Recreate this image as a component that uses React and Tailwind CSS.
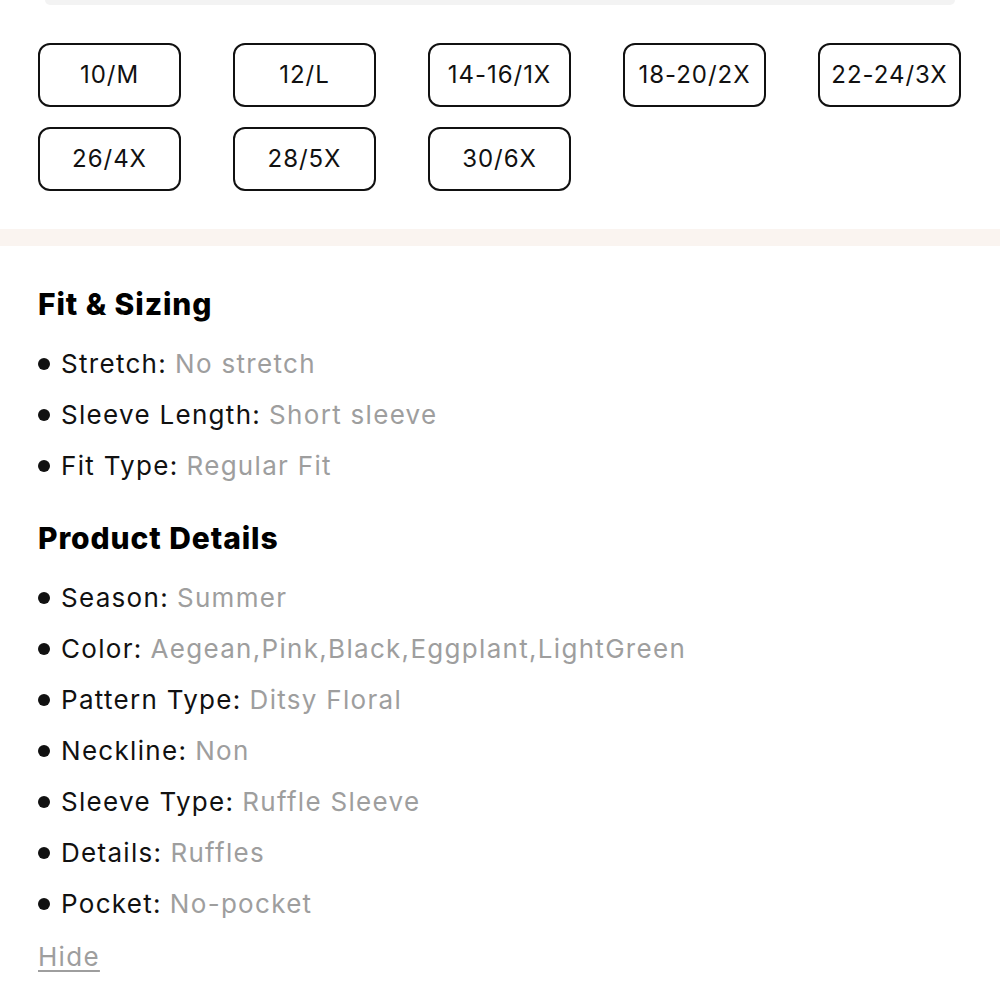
import React from "react";

const sizes = ["10/M", "12/L", "14-16/1X", "18-20/2X", "22-24/3X", "26/4X", "28/5X", "30/6X"];

const fit = [
  ["Stretch", "No stretch"],
  ["Sleeve Length", "Short sleeve"],
  ["Fit Type", "Regular Fit"],
];

const details = [
  ["Season", "Summer"],
  ["Color", "Aegean,Pink,Black,Eggplant,LightGreen"],
  ["Pattern Type", "Ditsy Floral"],
  ["Neckline", "Non"],
  ["Sleeve Type", "Ruffle Sleeve"],
  ["Details", "Ruffles"],
  ["Pocket", "No-pocket"],
];

function Item({ label, value }) {
  return (
    <div className="flex items-center h-[51px] text-[26px] tracking-[0.05em] whitespace-nowrap">
      <span className="w-[12px] h-[12px] rounded-full bg-[#111] mr-[11px] shrink-0"></span>
      <span className="text-[#111]">{label}:</span>
      <span className="text-[#9e9e9e] ml-[8px]">{value}</span>
    </div>
  );
}

export default function App() {
  return (
    <div className="w-[1000px] h-[1000px] bg-white overflow-hidden" style={{ fontFamily: "Inter, 'Open Sans', sans-serif" }}>
      <div className="mx-[45px] h-[5px] bg-[#f3f3f3] rounded-b-[16px]"></div>
      <div className="grid grid-cols-[repeat(5,143px)] gap-x-[52px] gap-y-[20px] pl-[38px] pt-[38px]">
        {sizes.map((s) => (
          <div key={s} className="h-[64px] border-2 border-[#111] rounded-[12px] flex items-center justify-center text-[24px] tracking-[0.04em] text-[#111]">
            {s}
          </div>
        ))}
      </div>
      <div className="mt-[38px] h-[17px] bg-[#faf4f0]"></div>
      <div className="pl-[38px] pt-[38px]">
        <div className="text-[30px] font-extrabold tracking-[0.03em] leading-[40px] text-black">Fit &amp; Sizing</div>
        <div className="mt-[14px]">
          {fit.map(([l, v]) => <Item key={l} label={l} value={v} />)}
        </div>
        <div className="mt-[27px] text-[30px] font-extrabold tracking-[0.03em] leading-[40px] text-black">Product Details</div>
        <div className="mt-[14px]">
          {details.map(([l, v]) => <Item key={l} label={l} value={v} />)}
        </div>
        <div className="h-[51px] pt-[4px] flex items-center text-[26px] tracking-[0.05em] text-[#9e9e9e] underline underline-offset-4">Hide</div>
      </div>
    </div>
  );
}
